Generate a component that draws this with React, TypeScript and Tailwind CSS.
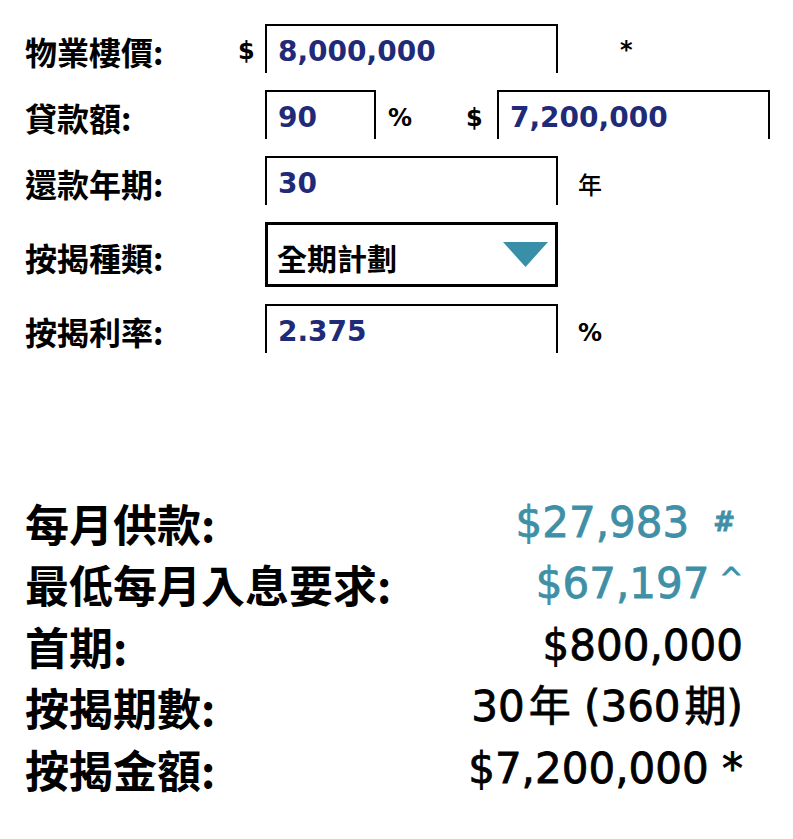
import clsx from 'clsx';

const labelCls = "font-['Noto_Sans_CJK_TC',sans-serif] text-[32px] font-bold leading-none text-black";
const symCls = "font-['DejaVu_Sans','Noto_Sans_CJK_TC',sans-serif] text-[24px] font-bold leading-none text-black";

function InputBox({ value, className }: { value: string; className?: string }) {
  return (
    <div className={clsx('flex h-[49px] items-center border-x-2 border-t-2 border-black pl-[11px] pt-[5px]', className)}>
      <span className="font-['DejaVu_Sans',sans-serif] text-[28px] font-bold leading-none text-[#1f2b78]">{value}</span>
    </div>
  );
}

function Row({ label, children, tall }: { label: string; children: React.ReactNode; tall?: boolean }) {
  return (
    <div className={clsx('flex items-center', tall ? 'h-[65px]' : 'h-[49px]')}>
      <div className={clsx(labelCls, 'w-[213px] pt-[4px]')}>{label}</div>
      {children}
    </div>
  );
}

function ResultRow({ label, children }: { label: string; children: React.ReactNode }) {
  return (
    <div className="flex h-[61.5px] items-center justify-between">
      <span className="font-['Noto_Sans_CJK_TC',sans-serif] text-[44px] font-semibold leading-none text-black">{label}</span>
      <span className="font-['DejaVu_Sans','Noto_Sans_CJK_TC',sans-serif] text-[42px] leading-none [-webkit-text-stroke:0.8px_currentColor]">
        {children}
      </span>
    </div>
  );
}

export default function App() {
  return (
    <div className="min-h-[839px] w-[793px] bg-white">
      <div className="flex flex-col gap-[17px] pl-[25px] pt-[24px]">
        <Row label="物業樓價:">
          <span className={clsx(symCls, 'w-[27px] pt-[4px] text-[22px]')}>$</span>
          <InputBox value="8,000,000" className="w-[293px]" />
          <span className={clsx(symCls, 'ml-[62px] pt-[2px] text-[20px]')}>*</span>
        </Row>
        <Row label="貸款額:">
          <span className="w-[27px]" />
          <InputBox value="90" className="w-[111px]" />
          <span className={clsx(symCls, 'ml-[12px] w-[78px] pt-[6px]')}>%</span>
          <span className={clsx(symCls, 'w-[31px] pt-[6px]')}>$</span>
          <InputBox value="7,200,000" className="w-[273px]" />
        </Row>
        <Row label="還款年期:">
          <span className="w-[27px]" />
          <InputBox value="30" className="w-[293px]" />
          <span className="ml-[20px] pt-[6px] font-['Noto_Sans_CJK_TC',sans-serif] text-[24px] font-medium leading-none text-black">年</span>
        </Row>
        <Row label="按揭種類:" tall>
          <span className="w-[27px]" />
          <div className="flex h-[65px] w-[293px] items-center justify-between border-[3px] border-black pl-[9px] pr-[7px]">
            <span className="pt-[4px] font-['Noto_Sans_CJK_TC',sans-serif] text-[30px] font-bold leading-none text-black">全期計劃</span>
            <svg width="45" height="25" viewBox="0 0 45 25">
              <polygon points="0,0 45,0 22.5,25" fill="#3a8fa8" />
            </svg>
          </div>
        </Row>
        <Row label="按揭利率:">
          <span className="w-[27px]" />
          <InputBox value="2.375" className="w-[293px]" />
          <span className={clsx(symCls, 'ml-[20px] pt-[8px]')}>%</span>
        </Row>
      </div>

      <div className="mt-[139px] flex flex-col pl-[25px] pr-[50px]">
        <ResultRow label="每月供款:">
          <span className="text-[#3f90a6]">
            $27,983<span className="ml-[24px] mr-[8px] align-[6px] text-[26px] font-bold">#</span>
          </span>
        </ResultRow>
        <ResultRow label="最低每月入息要求:">
          <span className="text-[#3f90a6]">
            $67,197<span className="ml-[10px] align-[10px] text-[28px]">^</span>
          </span>
        </ResultRow>
        <ResultRow label="首期:">
          <span className="text-black">$800,000</span>
        </ResultRow>
        <ResultRow label="按揭期數:">
          <span className="text-black">
            30<span className="ml-[4px]">年</span> (360<span className="ml-[4px]">期</span>)
          </span>
        </ResultRow>
        <ResultRow label="按揭金額:">
          <span className="text-black">$7,200,000 *</span>
        </ResultRow>
      </div>
    </div>
  );
}
